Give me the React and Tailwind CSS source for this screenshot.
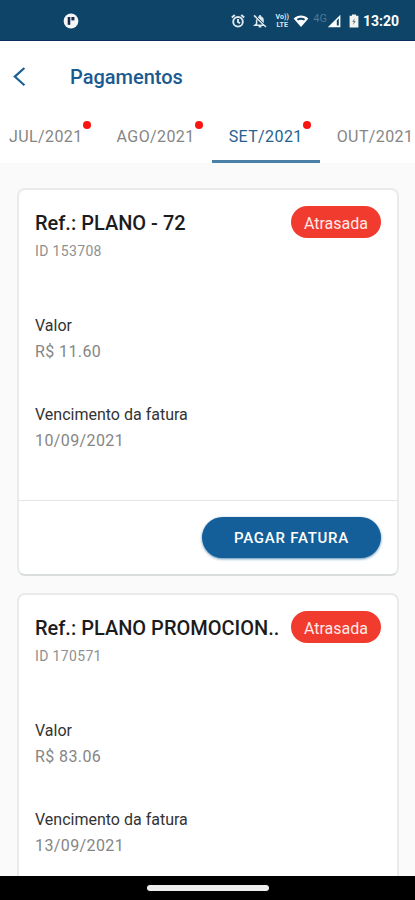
import React from 'react';

const TABS = [
  { label: 'JUL/2021', late: true },
  { label: 'AGO/2021', late: true },
  { label: 'SET/2021', late: true, active: true },
  { label: 'OUT/2021', late: false },
];

const INVOICES = [
  { id: '153708', title: 'Ref.: PLANO - 72', value: 'R$ 11.60', due: '10/09/2021' },
  { id: '170571', title: 'Ref.: PLANO PROMOCION..', value: 'R$ 83.06', due: '13/09/2021' },
];

function StatusBar() {
  return (
    <div className="flex h-[41px] shrink-0 items-center border-b border-[#0a2f5c] bg-[#0d4467] pt-[2px] pr-4 pl-[63px] text-white">
      <svg viewBox="0 0 16 16" className="size-4" fill="none">
        <circle cx="8" cy="8" r="7.4" fill="#f4f6f8" />
        <path d="M6 4v7.8" stroke="#1b2a4a" strokeWidth="2.6" />
        <path d="M8.4 4h3v3.4h-3z" fill="#1b2a4a" />
      </svg>
      <div className="ml-auto flex items-center">
        {/* alarm */}
        <svg viewBox="0 0 14 14" className="mr-2 size-[14px]" fill="none" stroke="#dfe8ee" strokeWidth="1.9">
          <circle cx="7" cy="7.8" r="4.8" />
          <path d="M7 5v3l2 1.2M0.8 3.4 3.8 0.9M13.2 3.4 10.2 0.9" />
        </svg>
        {/* bell off */}
        <svg viewBox="0 0 14 14" className="mr-2 size-[14px]">
          <path d="M4.6 3.2C5.2 2.8 6 2.4 6.2 2.3V1h1.6v1.3c2 .5 3 2 3 3.9v3.2z" fill="#dfe8ee" />
          <path d="M3.6 5.4v4.4L2 11.2h8.6M5.6 12.8h2.8M1 1.4 13 13" fill="none" stroke="#dfe8ee" strokeWidth="1.5" />
          <path d="M4.2 3.2 11.6 10.4" fill="none" stroke="#0d4467" strokeWidth="0.8" />
        </svg>
        <div className="mr-1 flex w-[14px] flex-col items-center text-[7px] leading-[8px] font-bold text-[#dfe8ee]">
          <span>Vo))</span>
          <span>LTE</span>
        </div>
        {/* wifi */}
        <svg viewBox="0 0 16 14" className="mr-1 h-[14px] w-4">
          <path d="M0.6 4.6C5 0.6 11 0.6 15.4 4.6L8 13z" fill="#fff" />
          <path d="M3.8 5C6.2 3.2 9.8 3.2 12.2 5L11 6.6C9.2 5.4 6.8 5.4 5 6.6z" fill="#0d4467" />
        </svg>
        <span className="-mt-1 text-[11px] leading-3 text-[#4f7795]">4G</span>
        {/* mobile signal */}
        <svg viewBox="0 0 14 14" className="mr-2 size-[14px]">
          <path d="M13.4 0.8v12.4H0.8z" fill="#fff" />
          <path d="M9.8 6.4 11.8 4.2v7.4h-2z" fill="#0d4467" />
        </svg>
        {/* battery */}
        <svg viewBox="0 0 10 14" className="mr-1 h-[14px] w-[10px]">
          <path d="M3 0.4h4v1.4h2.4v11.8H0.6V1.8H3z" fill="#f2f4ee" />
          <path d="M5.8 4 3.2 8h1.5l-.5 3 2.6-4H5.2z" fill="#6b8494" />
        </svg>
        <span className="text-sm leading-4 font-bold">13:20</span>
      </div>
    </div>
  );
}

function MonthTab({ label, late, active }) {
  return (
    <button
      role="tab"
      aria-selected={!!active}
      className={`flex h-[54px] shrink-0 items-center border-b-[3px] px-[17px] pt-1 text-base tracking-wide ${active ? 'border-[#4a7fa8] text-[#25638f]' : 'border-transparent text-[#858585]'}`}
    >
      <span className="relative">
        {label}
        {late && <span className="absolute -top-1 -right-2 size-2 rounded-full bg-[#f8160f]" />}
      </span>
    </button>
  );
}

function Field({ label, value }) {
  return (
    <div className="text-base">
      <dt className="leading-[26px] text-[#333]">{label}</dt>
      <dd className="leading-[26px] tracking-wide text-[#858585]">{value}</dd>
    </div>
  );
}

function InvoiceCard({ invoice }) {
  return (
    <article className="rounded-lg border-2 border-[#e9ebeb] border-b-[#d9dddd] bg-white">
      <div className="px-4 pt-4 pb-[46px]">
        <div className="flex items-start justify-between">
          <h2 className="pt-px text-xl leading-8 font-medium whitespace-nowrap text-[#1c1c1c]">{invoice.title}</h2>
          <span className="flex h-8 items-center rounded-full bg-[#f23b2f] px-[13px] pt-[3px] text-base text-[#ffe9e7]">Atrasada</span>
        </div>
        <p className="mt-[2px] text-sm tracking-wide text-[#909090]">ID {invoice.id}</p>
        <dl className="mt-[52px] flex flex-col gap-[37px]">
          <Field label="Valor" value={invoice.value} />
          <Field label="Vencimento da fatura" value={invoice.due} />
        </dl>
      </div>
      <div className="flex justify-end border-t border-[#e4e6e6] p-4">
        <button className="h-[41px] rounded-full bg-[#145f99] px-8 pt-[2px] text-[15px] font-medium tracking-wider text-white shadow-sm shadow-[#145f99]/60">
          PAGAR FATURA
        </button>
      </div>
    </article>
  );
}

export default function App() {
  return (
    <div className="flex h-screen flex-col bg-[#fafafa] font-[Roboto,sans-serif]">
      <StatusBar />
      <header className="shrink-0 overflow-hidden bg-white">
        <div className="flex h-[68px] items-center pt-1 pl-3">
          <button aria-label="Voltar" className="mr-[42px]">
            <svg viewBox="0 0 16 20" className="h-5 w-4" fill="none" stroke="#1b5f95" strokeWidth="2.2">
              <path d="M12.4 1 2.8 9.6l9.6 8.6" />
            </svg>
          </button>
          <h1 className="text-xl font-medium text-[#1b5a90]">Pagamentos</h1>
        </div>
        <div role="tablist" className="-ml-2 flex">
          {TABS.map((tab) => (
            <MonthTab key={tab.label} {...tab} />
          ))}
        </div>
      </header>
      <main className="flex-1 overflow-y-auto pt-[25px] pr-4 pl-[17px] [scrollbar-width:none]">
        <div className="flex flex-col gap-[17px]">
          {INVOICES.map((invoice) => (
            <InvoiceCard key={invoice.id} invoice={invoice} />
          ))}
        </div>
      </main>
      <footer className="flex h-6 shrink-0 items-center justify-center bg-black">
        <div className="h-[6px] w-[122px] rounded-full bg-[#eee]" />
      </footer>
    </div>
  );
}
